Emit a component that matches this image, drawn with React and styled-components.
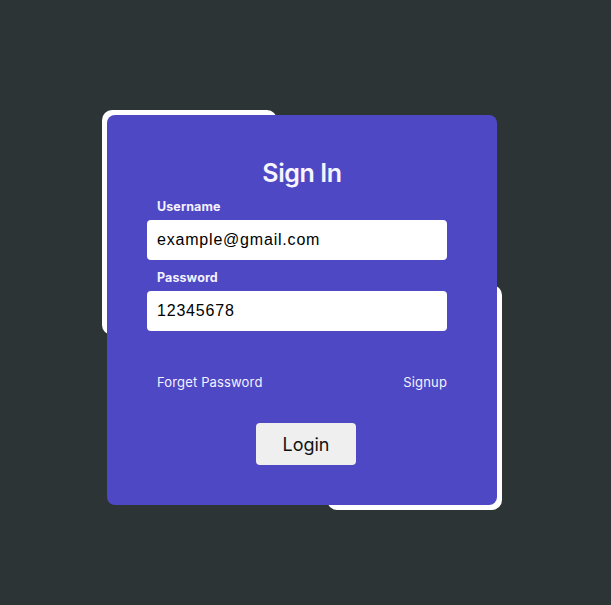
import React from "react";
import styled, { createGlobalStyle } from "styled-components";

const GlobalStyle = createGlobalStyle`
  html, body {
    margin: 0;
    padding: 0;
    background: #2d3436;
  }
  * {
    box-sizing: border-box;
  }
`;

const Page = styled.div`
  min-height: 605px;
  padding: 110px 0 0 102px;
  background: #2d3436;
`;

const Frame = styled.div`
  position: relative;
  width: 400px;
  height: 400px;
  padding: 5px;
  isolation: isolate;

  &::before,
  &::after {
    content: "";
    position: absolute;
    width: 175px;
    height: 225px;
    background: #ffffff;
    border-radius: 10px;
    z-index: -1;
  }
  &::before {
    top: 0;
    left: 0;
  }
  &::after {
    right: 0;
    bottom: 0;
  }
`;

const Card = styled.form`
  width: 390px;
  height: 390px;
  background: #4e48c4;
  border-radius: 8px;
  padding: 43px 45px 0 40px;
  display: flex;
  flex-direction: column;
  font-family: Inter, "Noto Sans", sans-serif;
  color: #f4f2ff;
`;

const Title = styled.h2`
  margin: 0 0 11px;
  font-size: 25px;
  line-height: 30px;
  font-weight: 600;
  text-align: center;
  letter-spacing: -0.4px;
  color: #f6f4ff;
  padding-left: 5px;
`;

const Label = styled.label`
  display: block;
  padding-left: 10px;
  margin-bottom: 5px;
  font-size: 12.5px;
  line-height: 16px;
  font-weight: 700;
  letter-spacing: 0.1px;
`;

const Input = styled.input`
  width: 300px;
  height: 40px;
  border: none;
  border-radius: 4px;
  padding: 0 10px;
  margin-bottom: ${(p) => p.$gap || 10}px;
  font-family: "Liberation Sans", Arial, sans-serif;
  font-size: 16px;
  letter-spacing: 0.8px;
  color: #000;
  background: #fff;
  outline: none;
`;

const LinkRow = styled.div`
  width: 300px;
  display: flex;
  justify-content: space-between;
  padding: 0 0 0 10px;
  font-size: 13px;
  line-height: 16px;
  letter-spacing: 0.15px;
  margin-bottom: 33px;
`;

const TextLink = styled.a`
  color: #f4f2ff;
  text-decoration: none;
  cursor: pointer;
`;

const LoginButton = styled.button`
  align-self: flex-start;
  margin-left: 109px;
  width: 100px;
  height: 42px;
  border: none;
  border-radius: 4px;
  background: #efefef;
  font-family: Inter, "Noto Sans", sans-serif;
  font-size: 18px;
  color: #111;
  cursor: pointer;
`;

export default function App() {
  return (
    <>
      <GlobalStyle />
      <Page>
        <Frame>
          <Card onSubmit={(e) => e.preventDefault()}>
            <Title>Sign In</Title>
            <Label>Username</Label>
            <Input type="text" defaultValue="example@gmail.com" />
            <Label>Password</Label>
            <Input type="text" defaultValue="12345678" $gap={43} />
            <LinkRow>
              <TextLink>Forget Password</TextLink>
              <TextLink>Signup</TextLink>
            </LinkRow>
            <LoginButton type="submit">Login</LoginButton>
          </Card>
        </Frame>
      </Page>
    </>
  );
}
